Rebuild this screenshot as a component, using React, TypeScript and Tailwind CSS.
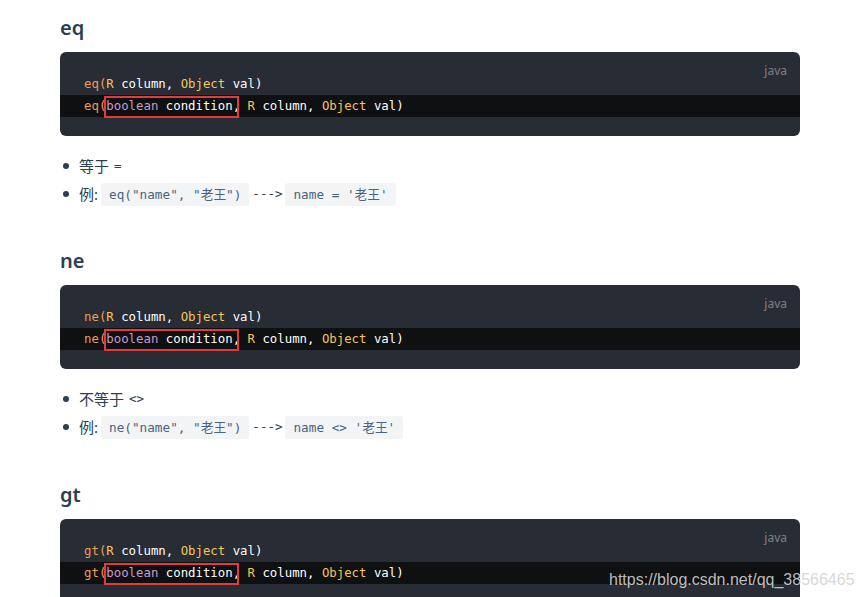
import React from "react";

const mono = "font-['DejaVu_Sans_Mono','Noto_Sans_CJK_SC',monospace]";
const sans = "font-['Noto_Sans','Noto_Sans_CJK_SC',sans-serif]";

type Section = {
  name: string;
  desc?: string;
  descCode?: string;
  example?: string;
  result?: string;
};

// the third one is cut off by the frame, so its notes are left out
const sections: Section[] = [
  { name: "eq", desc: "等于", descCode: "=", example: 'eq("name", "老王")', result: "name = '老王'" },
  { name: "ne", desc: "不等于", descCode: "<>", example: 'ne("name", "老王")', result: "name <> '老王'" },
  { name: "gt" },
];

function Tail() {
  return (
    <>
      <span className="text-[#f8c555]">R</span> column,{" "}
      <span className="text-[#f8c555]">Object</span> val)
    </>
  );
}

function CodeBlock({ fn }: { fn: string }) {
  return (
    <div className={`relative mt-3 h-[84px] rounded-md bg-[#282c34] pb-[19px] pt-[21px] text-[12.35px] leading-[22px] text-white ${mono}`}>
      <span className={`absolute right-[13px] top-[8px] text-[12px] text-white/40 ${sans}`}>java</span>
      <div className="whitespace-pre px-6">
        <span className="text-[#ec9f52]">{fn}(</span>
        <Tail />
      </div>
      <div className="whitespace-pre bg-[#0f1012] px-6">
        <span className="text-[#ec9f52]">{fn}(</span>
        <span className="relative inline-block">
          <span className="text-[#cc99cd]">boolean</span> condition
          <span className="absolute -left-[2px] -right-[6px] top-[1px] -bottom-[1px] border-2 border-[#e23b3b]" />
        </span>
        , <Tail />
      </div>
    </div>
  );
}

function Inline({ children }: { children: React.ReactNode }) {
  return (
    <span className={`mx-[3px] inline-block rounded-[3px] bg-[#f3f4f5] px-2 text-[12.7px] leading-[23px] text-[#476582] ${mono}`}>
      {children}
    </span>
  );
}

function Bullet({ children }: { children: React.ReactNode }) {
  return (
    <div className="flex h-[28px] items-center">
      <span className="ml-[3px] mr-[10px] h-[6px] w-[6px] rounded-full bg-[#2c3e50]" />
      <span className="flex items-center">{children}</span>
    </div>
  );
}

export default function App() {
  return (
    <div className={`relative min-h-[597px] w-[862px] overflow-hidden bg-white pt-4 text-[#2c3e50] ${sans}`}>
      <div className="ml-[60px] w-[740px]">
        {sections.map((s, i) => (
          <section key={s.name} className={i === 1 ? "mt-[41px]" : i === 2 ? "mt-[42px]" : ""}>
            <h3 className="text-[20px] font-semibold leading-[24px]">{s.name}</h3>
            <CodeBlock fn={s.name} />
            {s.desc && (
              <div className="mt-4 text-[15px]">
                <Bullet>
                  {s.desc} <span className={`ml-[5px] text-[12.5px] ${mono}`}>{s.descCode}</span>
                </Bullet>
                <Bullet>
                  例:<Inline>{s.example}</Inline>
                  <span className={`text-[12.5px] ${mono}`}>---&gt;</span>
                  <Inline>{s.result}</Inline>
                </Bullet>
              </div>
            )}
          </section>
        ))}
      </div>
      <span className="pointer-events-none absolute left-[609px] top-[568px] font-['Liberation_Sans',sans-serif] text-[16px] text-[#d2d2d2]/90">
        https://blog.csdn.net/qq_38566465
      </span>
    </div>
  );
}
